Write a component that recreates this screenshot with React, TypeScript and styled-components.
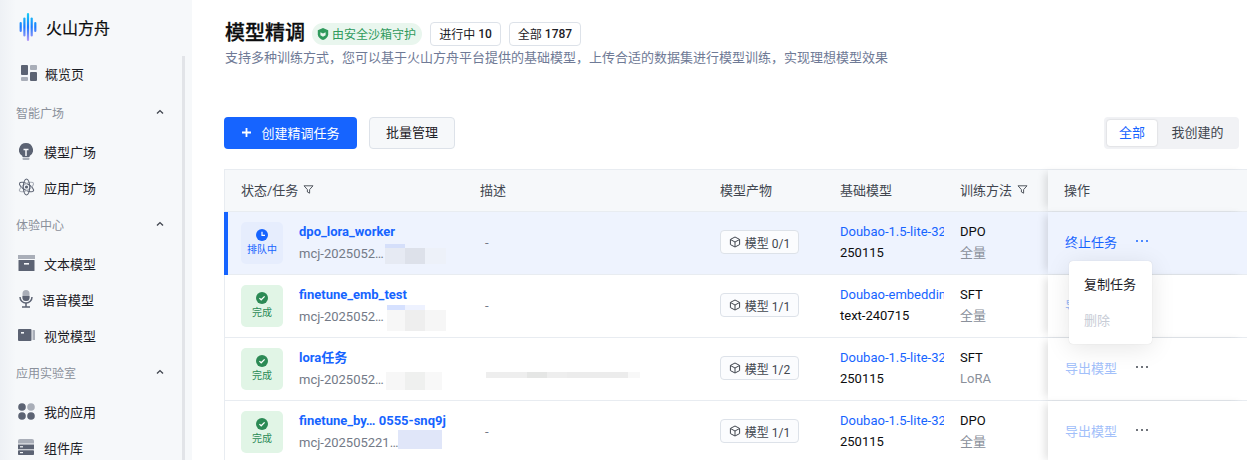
import React from 'react';
import styled, { createGlobalStyle } from 'styled-components';

const Global = createGlobalStyle`
  html, body { margin: 0; padding: 0; background: #fff; }
  body { font-family: Roboto, "Noto Sans CJK SC", sans-serif; font-size: 13px; color: #0c0d0e; -webkit-font-smoothing: antialiased; }
  * { box-sizing: border-box; }
`;

const Page = styled.div`
  width: 1247px; height: 460px; display: flex; overflow: hidden; background: #fff;
`;
const Sidebar = styled.aside`
  width: 192px; height: 460px; flex: none; position: relative; overflow: hidden;
  background: linear-gradient(90deg, #eef1f5 0, #f6f8fa 16px);
`;
const Scrollbar = styled.div`
  position: absolute; left: 182px; top: 56px; bottom: 0; width: 3px; background: #e2e4e8;
`;
const Brand = styled.div`
  height: 56px; display: flex; align-items: center; gap: 9px; padding: 0 0 2px 19px;
  font-size: 16px; font-weight: 400; color: #0c0d0e;
  -webkit-text-stroke: .2px #0c0d0e;
`;
const NavItem = styled.div<{ $gap?: number; $left?: number; $raise?: boolean }>`
  height: 36px; display: flex; align-items: center; gap: ${p => p.$gap ?? 9}px;
  padding-left: ${p => p.$left ?? 17}px; font-size: 13px; color: #1c2026;
  padding-top: ${p => p.$raise ? 0 : 2}px;
  padding-bottom: ${p => p.$raise ? 2 : 0}px;
`;
const NavIconBox = styled.span`
  width: 18px; height: 18px; display: flex; align-items: center; justify-content: center; flex: none;
`;
const GroupLabel = styled.div`
  height: 40px; display: flex; align-items: center; justify-content: space-between;
  padding: 0 28px 0 16px; font-size: 12px; color: #8a909b;
`;

const Main = styled.main`
  flex: 1; min-width: 0; padding: 22px 0 0 32px; position: relative;
`;
const TitleRow = styled.div`
  display: flex; align-items: center; height: 23px; gap: 8px;
`;
const Title = styled.h1`
  margin: 0 -1px 0 1px; font-size: 20px; line-height: 23px; font-weight: 500; color: #0c0d0e; white-space: nowrap;
  -webkit-text-stroke: .3px #0c0d0e;
`;
const SafeBadge = styled.span`
  height: 22px; width: 110px; padding: 0 0 0 4px; display: inline-flex; align-items: center; gap: 2px;
  border-radius: 11px; background: #e9f6ee; color: #2f9a5c; font-size: 12px; white-space: nowrap;
`;
const CountTag = styled.span<{ $w: number }>`
  height: 24px; width: ${p => p.$w}px; display: inline-flex; align-items: center; justify-content: center; gap: 3px;
  border: 1px solid #dde2e9; border-radius: 4px; font-size: 12px; color: #1c2026; white-space: nowrap;
  b { font-weight: 500; }
`;
const Desc = styled.p`
  margin: 3px 0 0 1px; font-size: 13px; line-height: 20px; color: #6f7a96; white-space: nowrap;
`;
const Toolbar = styled.div`
  margin-top: 49px; height: 32px; display: flex; align-items: center; gap: 12px; padding-right: 8px;
`;
const Primary = styled.button`
  width: 133px; height: 32px; border: 0; border-radius: 4px; background: #1664ff; color: #fff;
  display: flex; align-items: center; justify-content: center; gap: 10px; font: inherit; font-size: 13px; padding: 0 0 1px 1px;
`;
const Secondary = styled.button`
  width: 86px; height: 32px; border: 1px solid #dde2e9; border-radius: 4px; background: #f6f8fa; color: #1c2026;
  font: inherit; font-size: 13px; padding: 0 0 3px;
`;
const Segment = styled.div`
  margin-left: auto; height: 32px; padding: 3px; display: flex; border-radius: 4px; background: #f1f2f5;
`;
const SegItem = styled.div<{ $active?: boolean }>`
  height: 26px; display: flex; align-items: center; justify-content: center; font-size: 13px; border-radius: 3px; padding-bottom: 3px;
  padding-left: ${p => p.$active ? 0 : 2}px;
  width: ${p => p.$active ? 50 : 79}px;
  color: ${p => p.$active ? '#1664ff' : '#41464f'};
  background: ${p => p.$active ? '#fff' : 'transparent'};
  box-shadow: ${p => p.$active ? '0 0 2px rgba(0,0,0,.2)' : 'none'};
`;

const Table = styled.div`
  margin-top: 20px; border-top: 1px solid #e8ecf1; border-left: 1px solid #e8ecf1; position: relative; width: 1023px;
`;
const cols = '239px 240px 120px 120px 104px 199px';
const HeadRow = styled.div`
  display: grid; grid-template-columns: ${cols}; height: 42px; background: #f6f8fa; border-bottom: 1px solid #e8ecf1;
`;
const HeadCell = styled.div<{ $fixed?: boolean }>`
  display: flex; align-items: center; gap: 5px; padding: 0 0 2px 16px; color: #41464f; font-size: 13px; white-space: nowrap;
  ${p => p.$fixed ? 'background:#f6f8fa; box-shadow:-6px 0 8px -3px rgba(0,0,0,.12);' : ''}
`;
const Row = styled.div<{ $active?: boolean }>`
  display: grid; grid-template-columns: ${cols}; height: 63px; position: relative;
  background: ${p => p.$active ? '#eef3fe' : '#fff'};
  border-bottom: 1px solid #e8ecf1;
`;
const ActiveMark = styled.span`
  position: absolute; left: -1px; top: 0; bottom: -1px; width: 4px; background: #1664ff;
`;
const TaskCell = styled.div`
  display: flex; align-items: center; gap: 16px; padding-left: 16px; min-width: 0;
`;
const StatusBox = styled.div<{ $done?: boolean }>`
  width: 42px; height: 42px; flex: none; border-radius: 5px; display: flex; flex-direction: column; align-items: center; justify-content: center; gap: 2px;
  background: ${p => p.$done ? '#e1f5e6' : '#e6edfd'};
  color: ${p => p.$done ? '#2c8a55' : '#1664ff'};
  font-size: 10px; line-height: 14px;
`;
const TaskText = styled.div`
  display: flex; flex-direction: column; gap: 2px; min-width: 0; padding-bottom: 1px;
`;
const TaskName = styled.div`
  font-size: 13px; line-height: 20px; font-weight: 700; color: #1664ff; white-space: nowrap;
`;
const TaskId = styled.div`
  font-size: 13px; line-height: 20px; color: #737a87; white-space: nowrap;
`;
const DescCell = styled.div`
  display: flex; align-items: center; padding: 0 0 2px 21px; color: #737a87;
`;
const ProductCell = styled.div`
  display: flex; align-items: center; padding: 0 0 2px 16px;
`;
const ProductTag = styled.span`
  height: 24px; width: 79px; display: inline-flex; align-items: center; justify-content: center; gap: 4px;
  background: #fbfcfe; border: 1px solid #dde2e9; border-radius: 4px; font-size: 12px; color: #41464f; white-space: nowrap;
`;
const StackCell = styled.div`
  display: flex; flex-direction: column; justify-content: center; gap: 1px; padding-left: 16px; overflow: hidden; white-space: nowrap; line-height: 20px; padding-bottom: 1px;
`;
const LinkLine = styled.div`
  color: #1664ff; font-size: 13px;
`;
const Plain = styled.div`
  color: #0c0d0e; font-size: 13px;
`;
const Muted = styled.div`
  color: #8a909b; font-size: 13px;
`;
const ActionCell = styled.div<{ $active?: boolean }>`
  display: flex; align-items: center; gap: 19px; padding: 0 0 3px 17px; position: relative;
  background: ${p => p.$active ? '#eef3fe' : '#fff'};
  box-shadow: -6px 0 8px -3px rgba(0,0,0,.12);
`;
const ActionLink = styled.span<{ $off?: boolean }>`
  font-size: 13px; color: ${p => p.$off ? '#a2c0fa' : '#1664ff'}; white-space: nowrap;
`;
const Dots = styled.span<{ $blue?: boolean }>`
  display: inline-flex; gap: 3px; margin-bottom: 2px;
  i { width: 2px; height: 2px; border-radius: 50%; background: ${p => p.$blue ? '#1664ff' : '#41464f'}; display: block; }
`;
const Menu = styled.div`
  position: absolute; left: 21px; top: 49px; width: 83px; height: 83px; background: #fff; border-radius: 4px; z-index: 5;
  box-shadow: 0 4px 24px rgba(0,0,0,.1), 0 0 1px rgba(0,0,0,.18); padding: 4px 0 0 15px;
`;
const MenuItem = styled.div<{ $disabled?: boolean }>`
  height: 36px; display: flex; align-items: center; font-size: 13px; color: ${p => p.$disabled ? '#c7ccd6' : '#1c2026'};
`;
const Patch = styled.span<{ $x: number; $y: number; $w: number; $h: number; $c: string }>`
  position: absolute; left: ${p => p.$x}px; top: ${p => p.$y}px; width: ${p => p.$w}px; height: ${p => p.$h}px; background: ${p => p.$c};
`;

const Logo = () => (
  <svg width="18" height="30" viewBox="0 0 18 30">
    <defs>
      <linearGradient id="lg" x1="0" y1="0" x2="0" y2="30" gradientUnits="userSpaceOnUse">
        <stop offset="0" stopColor="#17d4f4" />
        <stop offset=".5" stopColor="#1a7bff" />
        <stop offset="1" stopColor="#c39cf7" />
      </linearGradient>
    </defs>
    {[[.6, 10, 10], [4.3, 5.5, 19], [7.9, 1, 28], [11.6, 5.5, 19], [15.2, 10, 10]].map(([x, y, h], i) => (
      <rect key={i} x={x} y={y} width="2.2" height={h} rx="1.1" fill="url(#lg)" />
    ))}
  </svg>
);
const D = '#5c6373', L = '#a9aeb8';
const IOverview = () => (
  <svg width="16" height="16" viewBox="0 0 16 16">
    <rect x="0" y="0" width="7" height="10" rx="1" fill={D} /><rect x="9" y="0" width="7" height="5" rx="1" fill={L} />
    <rect x="0" y="12" width="7" height="4" rx="1" fill={L} /><rect x="9" y="7" width="7" height="9" rx="1" fill={D} />
  </svg>
);
const IBulb = () => (
  <svg width="14" height="17" viewBox="0 0 14 17">
    <path d="M7 0a7 7 0 0 0-3.6 13V14h7.2v-1A7 7 0 0 0 7 0z" fill={D} />
    <path d="M4.5 6.5h5M7 6.5v6.5" stroke="#f6f8fa" strokeWidth="1.5" fill="none" />
    <rect x="3.5" y="14.6" width="7" height="2.4" rx="1" fill={L} />
  </svg>
);
const IAtom = () => (
  <svg width="17" height="18" viewBox="0 0 18 18" fill="none" stroke={D} strokeWidth="1.1">
    <ellipse cx="9" cy="9" rx="8.4" ry="3.4" transform="rotate(30 9 9)" />
    <ellipse cx="9" cy="9" rx="8.4" ry="3.4" transform="rotate(-30 9 9)" stroke={L} />
    <ellipse cx="9" cy="9" rx="8.4" ry="3.4" transform="rotate(90 9 9)" />
    <circle cx="9" cy="9" r="1.7" fill={D} stroke="none" />
  </svg>
);
const IBox = () => (
  <svg width="17" height="16" viewBox="0 0 17 16">
    <rect x="0" y="0" width="17" height="4" fill={L} />
    <rect x="0.5" y="5" width="16" height="11" rx=".5" fill={D} />
    <rect x="6" y="8" width="5" height="1.6" fill="#f6f8fa" />
  </svg>
);
const IMic = () => (
  <svg width="14" height="18" viewBox="0 0 14 18">
    <rect x="3.5" y="0" width="7" height="11" rx="3.5" fill={L} />
    <path d="M3.5 6h7v1.5a3.5 3.5 0 0 1-7 0z" fill={D} />
    <path d="M1 7a6 6 0 0 0 12 0" stroke={D} strokeWidth="1.5" fill="none" />
    <path d="M7 13v3.5M3 17h8" stroke={D} strokeWidth="1.5" fill="none" />
  </svg>
);
const IVideo = () => (
  <svg width="17" height="12" viewBox="0 0 17 12">
    <rect x="0" y="0" width="13.5" height="12" rx="1" fill={D} />
    <rect x="14.5" y="1" width="2.5" height="10" rx=".5" fill={L} />
    <rect x="3" y="3" width="3" height="1.6" fill="#f6f8fa" />
  </svg>
);
const IApps = () => (
  <svg width="17" height="17" viewBox="0 0 17 17">
    <circle cx="4" cy="4" r="3.8" fill={D} /><circle cx="13" cy="4" r="3.8" fill={L} />
    <circle cx="4" cy="13" r="3.8" fill={D} /><circle cx="13" cy="13" r="3.8" fill={D} />
  </svg>
);
const IStack = () => (
  <svg width="16" height="16" viewBox="0 0 16 16">
    <path d="M2 0h12a2 2 0 0 1 2 2v2.5H0V2a2 2 0 0 1 2-2z" fill={L} />
    <rect x="0" y="5.5" width="16" height="4.8" fill={D} /><rect x="0" y="11.2" width="16" height="4.8" rx=".8" fill={D} />
    <rect x="2" y="7.2" width="3" height="1.2" fill="#f6f8fa" /><rect x="2" y="13" width="3" height="1.2" fill="#f6f8fa" />
  </svg>
);
const Chevron = () => (
  <svg width="8" height="6" viewBox="0 0 8 6" fill="none" stroke="#41464f" strokeWidth="1.4"><path d="M1 4.5 4 1.6l3 2.9" /></svg>
);
const Shield = () => (
  <svg width="14" height="14" viewBox="0 0 14 14">
    <path d="M7 1l5.2 2.2v4.2c0 2.6-2.4 4.5-5.2 5.6-2.8-1.1-5.2-3-5.2-5.6V3.2z" fill="#2f9a5c" />
    <path d="M4.4 5.2 7 6.6l2.6-1.4v3L7 9.8 4.4 8.2z" fill="#e9f6ee" />
  </svg>
);
const Filter = () => (
  <svg width="11" height="11" viewBox="0 0 11 11" fill="none" stroke="#41464f" strokeWidth=".9" strokeLinejoin="round">
    <path d="M1 1.8h9L6.6 5.6v3.6L4.4 8V5.6z" />
  </svg>
);
const Cube = () => (
  <svg width="12" height="12" viewBox="0 0 12 12" fill="none" stroke="#41464f" strokeWidth="1" strokeLinejoin="round">
    <path d="M6 1 10.6 3.4v5.2L6 11 1.4 8.6V3.4z" /><path d="M1.6 3.6 6 6l4.4-2.4M6 6v4.8" />
  </svg>
);
const DoneIcon = () => (
  <svg width="12" height="12" viewBox="0 0 12 12">
    <circle cx="6" cy="6" r="6" fill="#2c8a55" />
    <path d="M3.4 6.1 5.2 7.8 8.6 4.4" stroke="#fff" strokeWidth="1.3" fill="none" />
  </svg>
);
const ClockIcon = () => (
  <svg width="12" height="12" viewBox="0 0 12 12">
    <circle cx="6" cy="6" r="6" fill="#1664ff" />
    <path d="M6 2.8V6.3H9" stroke="#fff" strokeWidth="1.2" fill="none" />
  </svg>
);

type P = [number, number, number, number, string];
const rows: {
  done: boolean; name: string; id: string; desc: string; tag: string; link: string; ver: string; method: string; kind: string;
  action: string; off: boolean; patches: P[];
}[] = [
  { done: false, name: 'dpo_lora_worker', id: 'mcj-2025052…', desc: '-', tag: '0/1', link: 'Doubao-1.5-lite-32', ver: '250115', method: 'DPO', kind: '全量', action: '终止任务', off: false,
    patches: [[160, 32, 20, 4, '#d5dffa'], [160, 36, 20, 16, '#e6eaf3'], [180, 36, 20, 16, '#dde1ea'], [200, 36, 21, 16, '#edf1f9']] },
  { done: true, name: 'finetune_emb_test', id: 'mcj-2025052…', desc: '-', tag: '1/1', link: 'Doubao-embedding', ver: 'text-240715', method: 'SFT', kind: '全量', action: '导出模型', off: true,
    patches: [[162, 30, 18, 5, '#d6e1ff'], [180, 30, 20, 5, '#eef2ff'], [162, 35, 18, 21, '#f7f7f7'], [180, 35, 20, 21, '#eeeeee'], [200, 35, 21, 21, '#f6f6f6']] },
  { done: true, name: 'lora任务', id: 'mcj-2025052…', desc: '', tag: '1/2', link: 'Doubao-1.5-lite-32', ver: '250115', method: 'SFT', kind: 'LoRA', action: '导出模型', off: true,
    patches: [[161, 34, 19, 18, '#f7f7f7'], [180, 34, 20, 18, '#eff0ef'], [200, 34, 17, 18, '#f8f8f8'], [261, 34, 41, 6, '#eeeeee'], [302, 34, 20, 6, '#e5e6e5'], [322, 34, 20, 6, '#eeeeee'], [342, 34, 61, 6, '#ececec'], [403, 34, 12, 6, '#f8f8f8']] },
  { done: true, name: 'finetune_by… 0555-snq9j', id: 'mcj-202505221…', desc: '-', tag: '1/1', link: 'Doubao-1.5-lite-32', ver: '250115', method: 'DPO', kind: '全量', action: '导出模型', off: true,
    patches: [[173, 29, 44, 19, '#e0e6f9']] },
];

const DotsIcon = ({ blue }: { blue?: boolean }) => <Dots $blue={blue}><i /><i /><i /></Dots>;

export default function App() {
  return (
    <Page>
      <Global />
      <Sidebar>
        <Scrollbar />
        <Brand><Logo />火山方舟</Brand>
        <NavItem $left={20} $gap={7} $raise><NavIconBox><IOverview /></NavIconBox>概览页</NavItem>
        <GroupLabel>智能广场<Chevron /></GroupLabel>
        <NavItem><NavIconBox><IBulb /></NavIconBox>模型广场</NavItem>
        <NavItem><NavIconBox><IAtom /></NavIconBox>应用广场</NavItem>
        <GroupLabel>体验中心<Chevron /></GroupLabel>
        <NavItem><NavIconBox><IBox /></NavIconBox>文本模型</NavItem>
        <NavItem $gap={7}><NavIconBox><IMic /></NavIconBox>语音模型</NavItem>
        <NavItem><NavIconBox><IVideo /></NavIconBox>视觉模型</NavItem>
        <GroupLabel>应用实验室<Chevron /></GroupLabel>
        <NavItem><NavIconBox><IApps /></NavIconBox>我的应用</NavItem>
        <NavItem><NavIconBox><IStack /></NavIconBox>组件库</NavItem>
      </Sidebar>
      <Main>
        <TitleRow>
          <Title>模型精调</Title>
          <SafeBadge><Shield />由安全沙箱守护</SafeBadge>
          <CountTag $w={71}>进行中 <b>10</b></CountTag>
          <CountTag $w={72}>全部 <b>1787</b></CountTag>
        </TitleRow>
        <Desc>支持多种训练方式，您可以基于火山方舟平台提供的基础模型，上传合适的数据集进行模型训练，实现理想模型效果</Desc>
        <Toolbar>
          <Primary>
            <svg width="9" height="9" viewBox="0 0 9 9" stroke="#fff" strokeWidth="1.8"><path d="M4.5 0v9M0 4.5h9" /></svg>
            创建精调任务
          </Primary>
          <Secondary>批量管理</Secondary>
          <Segment>
            <SegItem $active>全部</SegItem>
            <SegItem>我创建的</SegItem>
          </Segment>
        </Toolbar>
        <Table>
          <HeadRow>
            <HeadCell>状态/任务<Filter /></HeadCell>
            <HeadCell>描述</HeadCell>
            <HeadCell>模型产物</HeadCell>
            <HeadCell>基础模型</HeadCell>
            <HeadCell>训练方法<Filter /></HeadCell>
            <HeadCell $fixed>操作</HeadCell>
          </HeadRow>
          {rows.map((r, i) => (
            <Row key={r.name} $active={i === 0}>
              {i === 0 && <ActiveMark />}
              <TaskCell>
                <StatusBox $done={r.done}>
                  {r.done ? <DoneIcon /> : <ClockIcon />}
                  {r.done ? '完成' : '排队中'}
                </StatusBox>
                <TaskText>
                  <TaskName>{r.name}</TaskName>
                  <TaskId>{r.id}</TaskId>
                </TaskText>
              </TaskCell>
              <DescCell>{r.desc}</DescCell>
              <ProductCell><ProductTag><Cube />模型 {r.tag}</ProductTag></ProductCell>
              <StackCell><LinkLine>{r.link}</LinkLine><Plain>{r.ver}</Plain></StackCell>
              <StackCell><Plain>{r.method}</Plain><Muted>{r.kind}</Muted></StackCell>
              <ActionCell $active={i === 0}>
                <ActionLink $off={r.off}>{r.action}</ActionLink>
                <DotsIcon blue={i === 0} />
                {i === 0 && (
                  <Menu>
                    <MenuItem>复制任务</MenuItem>
                    <MenuItem $disabled>删除</MenuItem>
                  </Menu>
                )}
              </ActionCell>
              {r.patches.map((p, j) => <Patch key={j} $x={p[0]} $y={p[1]} $w={p[2]} $h={p[3]} $c={p[4]} />)}
            </Row>
          ))}
        </Table>
      </Main>
    </Page>
  );
}
